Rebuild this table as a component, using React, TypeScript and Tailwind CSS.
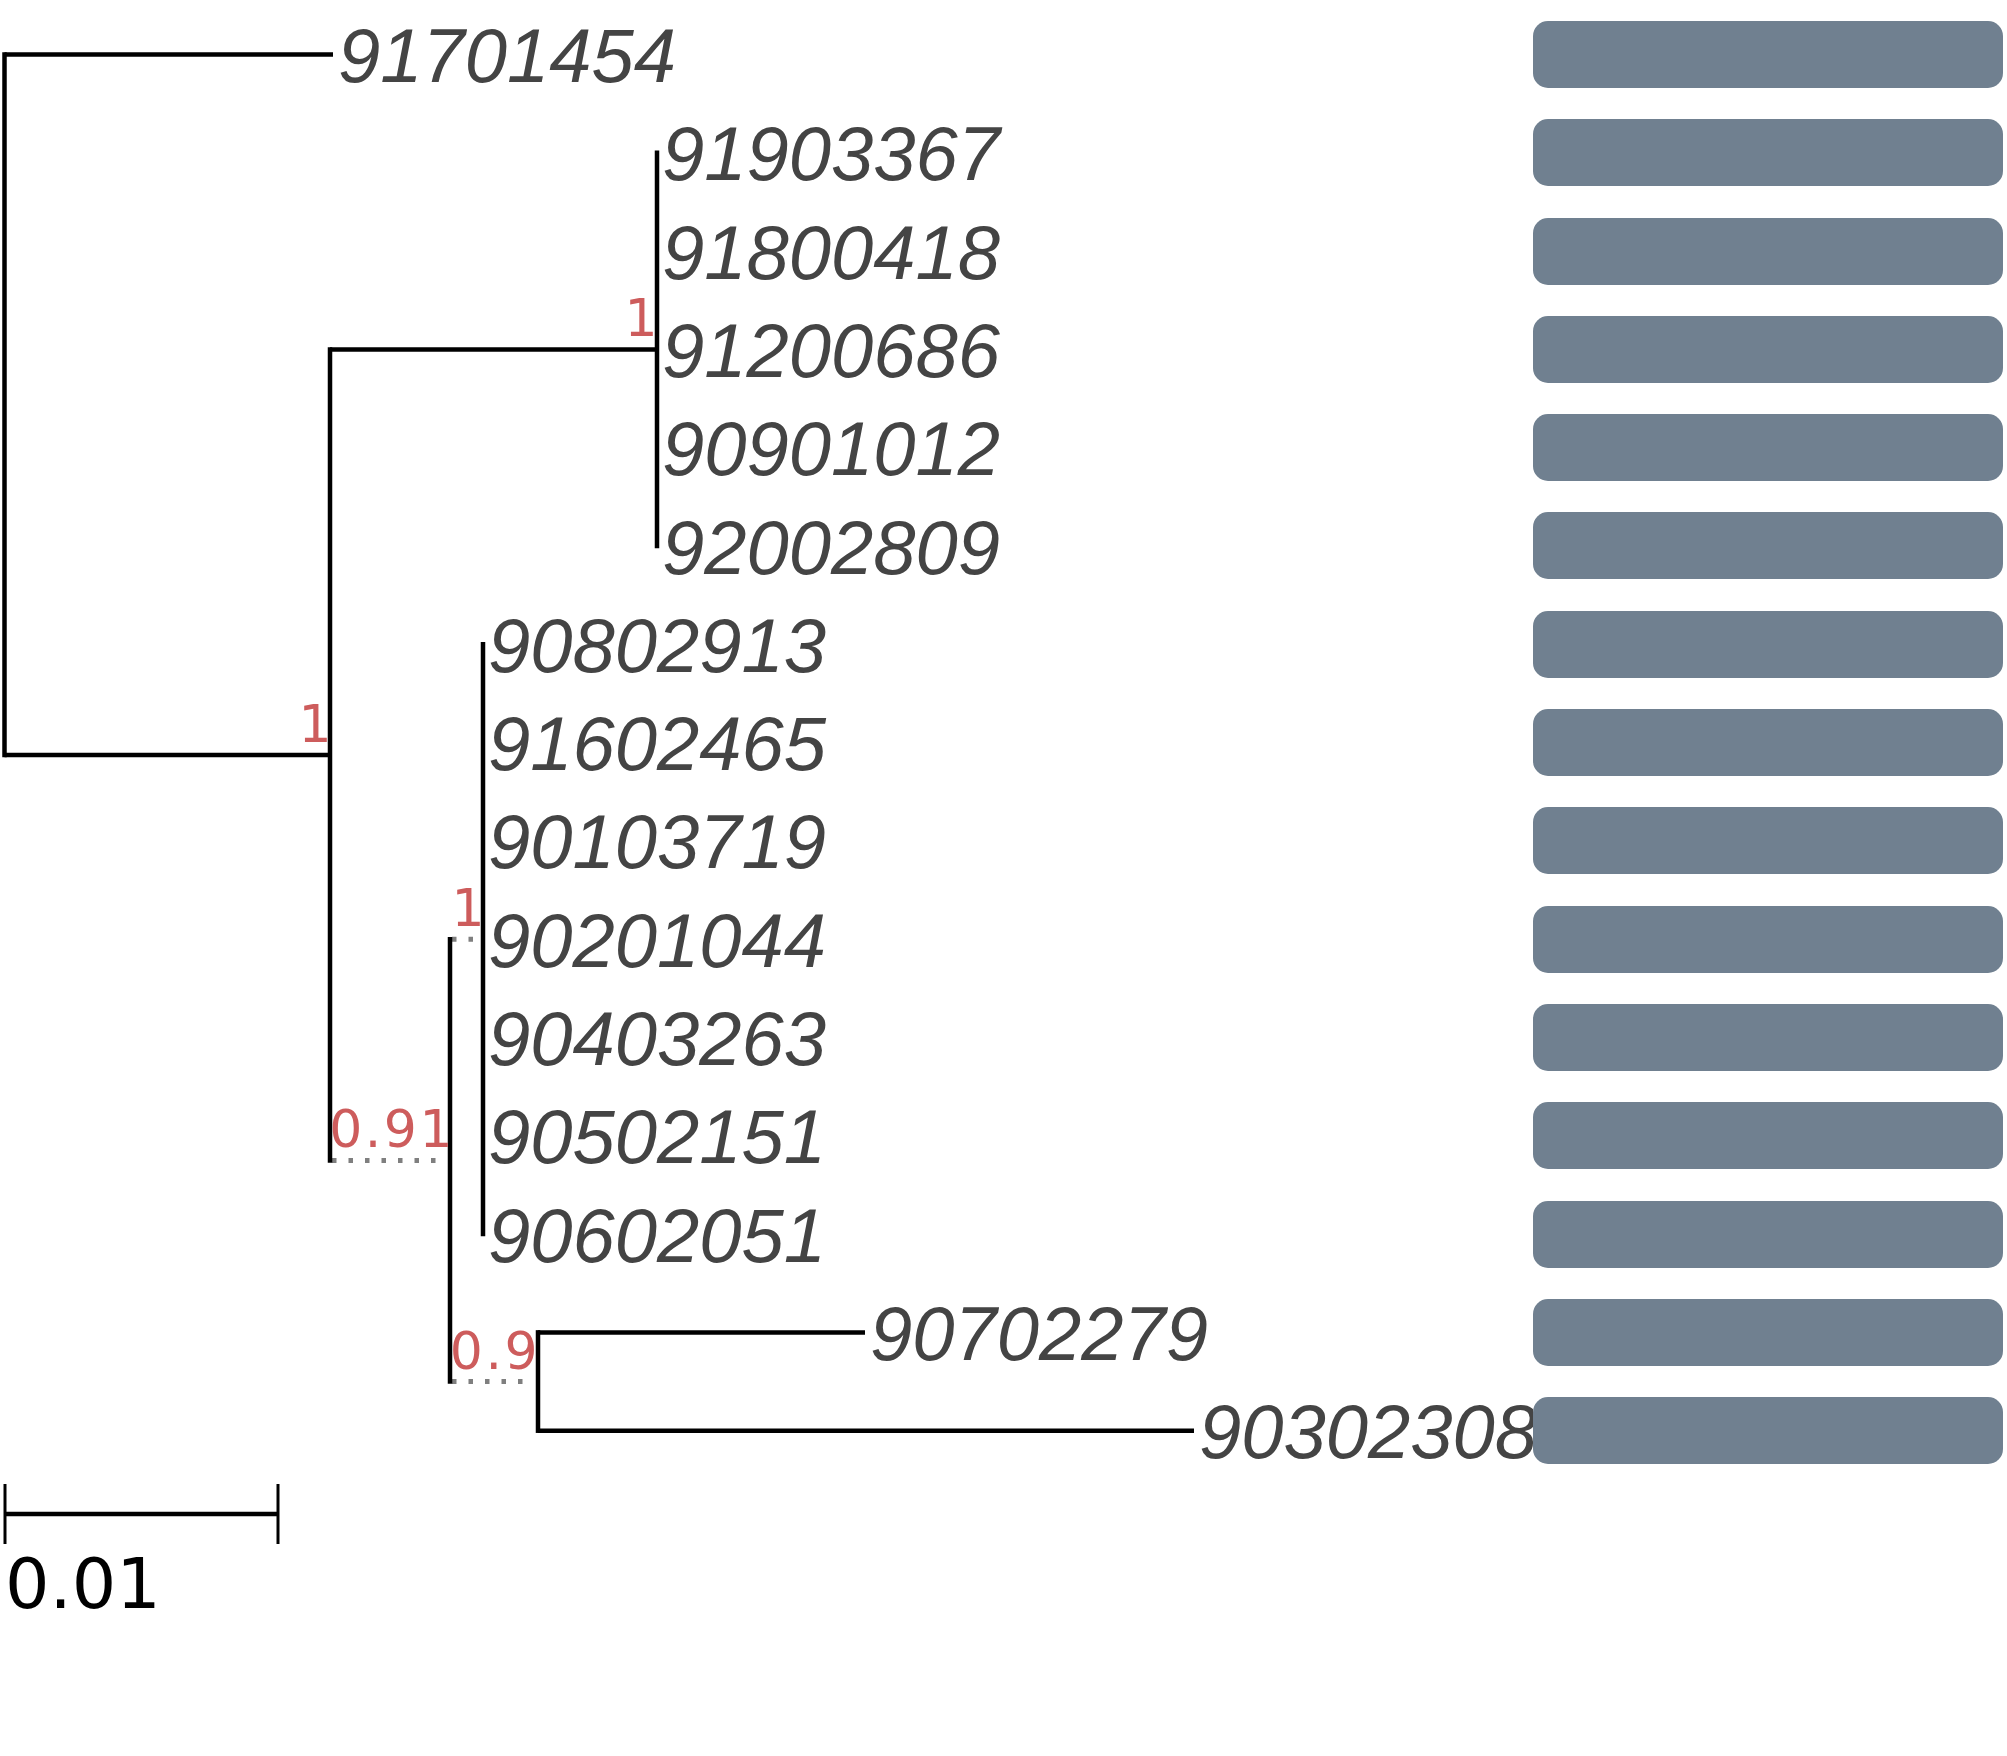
const ROW0 = 54.5;
const STEP = 98.3;
const rowY = (i: number) => ROW0 + STEP * i;

const leaves = [
  { name: "91701454", x: 333 },
  { name: "91903367", x: 657 },
  { name: "91800418", x: 657 },
  { name: "91200686", x: 657 },
  { name: "90901012", x: 657 },
  { name: "92002809", x: 657 },
  { name: "90802913", x: 483 },
  { name: "91602465", x: 483 },
  { name: "90103719", x: 483 },
  { name: "90201044", x: 483 },
  { name: "90403263", x: 483 },
  { name: "90502151", x: 483 },
  { name: "90602051", x: 483 },
  { name: "90702279", x: 865 },
  { name: "90302308", x: 1194 },
];

// node y positions
const yClade1 = (rowY(1) + rowY(5)) / 2;
const yClade2 = (rowY(6) + rowY(12)) / 2;
const yC = (rowY(13) + rowY(14)) / 2;
const yB = (yClade2 + yC) / 2;
const yA = (yClade1 + yB) / 2;

type Seg = { x1: number; y1: number; x2: number; y2: number; dotted?: boolean };

const verticals: Seg[] = [
  { x1: 4.5, y1: rowY(0), x2: 4.5, y2: yA },
  { x1: 330, y1: yClade1, x2: 330, y2: yB },
  { x1: 657, y1: rowY(1), x2: 657, y2: rowY(5) },
  { x1: 450, y1: yClade2, x2: 450, y2: yC },
  { x1: 483, y1: rowY(6), x2: 483, y2: rowY(12) },
  { x1: 538, y1: rowY(13), x2: 538, y2: rowY(14) },
];

const horizontals: Seg[] = [
  { x1: 4.5, y1: rowY(0), x2: 333, y2: rowY(0) },
  { x1: 4.5, y1: yA, x2: 330, y2: yA },
  { x1: 330, y1: yClade1, x2: 657, y2: yClade1 },
  { x1: 330, y1: yB, x2: 450, y2: yB, dotted: true },
  { x1: 450, y1: yClade2, x2: 483, y2: yClade2, dotted: true },
  { x1: 450, y1: yC, x2: 538, y2: yC, dotted: true },
  { x1: 538, y1: rowY(13), x2: 865, y2: rowY(13) },
  { x1: 538, y1: rowY(14), x2: 1194, y2: rowY(14) },
];

const supports = [
  { label: "1", x: 334, y: yA },
  { label: "1", x: 660, y: yClade1 },
  { label: "0.91", x: 455, y: yB },
  { label: "1", x: 487, y: yClade2 },
  { label: "0.9", x: 540, y: yC },
];

function Tree() {
  return (
    <svg width={1533} height={1756} viewBox="0 0 1533 1756" className="block shrink-0">
      {horizontals.map((s, i) =>
        s.dotted ? (
          <line
            key={`h${i}`}
            x1={s.x1 + 2}
            y1={s.y1}
            x2={s.x2 - 4}
            y2={s.y2}
            stroke="#7f7f7f"
            strokeWidth={5}
            strokeDasharray="4.5 12"
          />
        ) : (
          <line key={`h${i}`} x1={s.x1} y1={s.y1} x2={s.x2} y2={s.y2} stroke="#000" strokeWidth={4.5} />
        )
      )}
      {verticals.map((s, i) => (
        <line
          key={`v${i}`}
          x1={s.x1}
          y1={s.y1}
          x2={s.x2}
          y2={s.y2}
          stroke="#000"
          strokeWidth={4.5}
          strokeLinecap="square"
        />
      ))}

      {supports.map((s, i) => (
        <text
          key={`s${i}`}
          x={s.x}
          y={s.y - 13}
          textAnchor="end"
          fill="#cd5c5c"
          fontSize={52}
          letterSpacing={2.5}
          fontFamily='"DejaVu Sans", sans-serif'
        >
          {s.label}
        </text>
      ))}

      {leaves.map((l, i) => (
        <text
          key={l.name}
          x={l.x + 5}
          y={rowY(i) + 27.5}
          fill="#444444"
          fontSize={76}
          fontStyle="italic"
          fontFamily='"Liberation Sans", Arial, sans-serif'
        >
          {l.name}
        </text>
      ))}

      {/* scale bar */}
      <line x1={5} y1={1514} x2={278} y2={1514} stroke="#000" strokeWidth={4.5} />
      <line x1={5} y1={1484} x2={5} y2={1544} stroke="#000" strokeWidth={3} />
      <line x1={278} y1={1484} x2={278} y2={1544} stroke="#000" strokeWidth={3} />
      <text x={5} y={1608} fill="#000" fontSize={70} fontFamily='"DejaVu Sans", sans-serif'>
        0.01
      </text>
    </svg>
  );
}

export default function App() {
  return (
    <div className="w-[2007px] h-[1756px] bg-white flex overflow-hidden">
      <Tree />
      <div className="flex flex-col gap-[31.3px] pt-[21px]">
        {leaves.map((l) => (
          <div key={l.name} className="w-[470px] h-[67px] rounded-[15px] bg-[#708090]" />
        ))}
      </div>
    </div>
  );
}
